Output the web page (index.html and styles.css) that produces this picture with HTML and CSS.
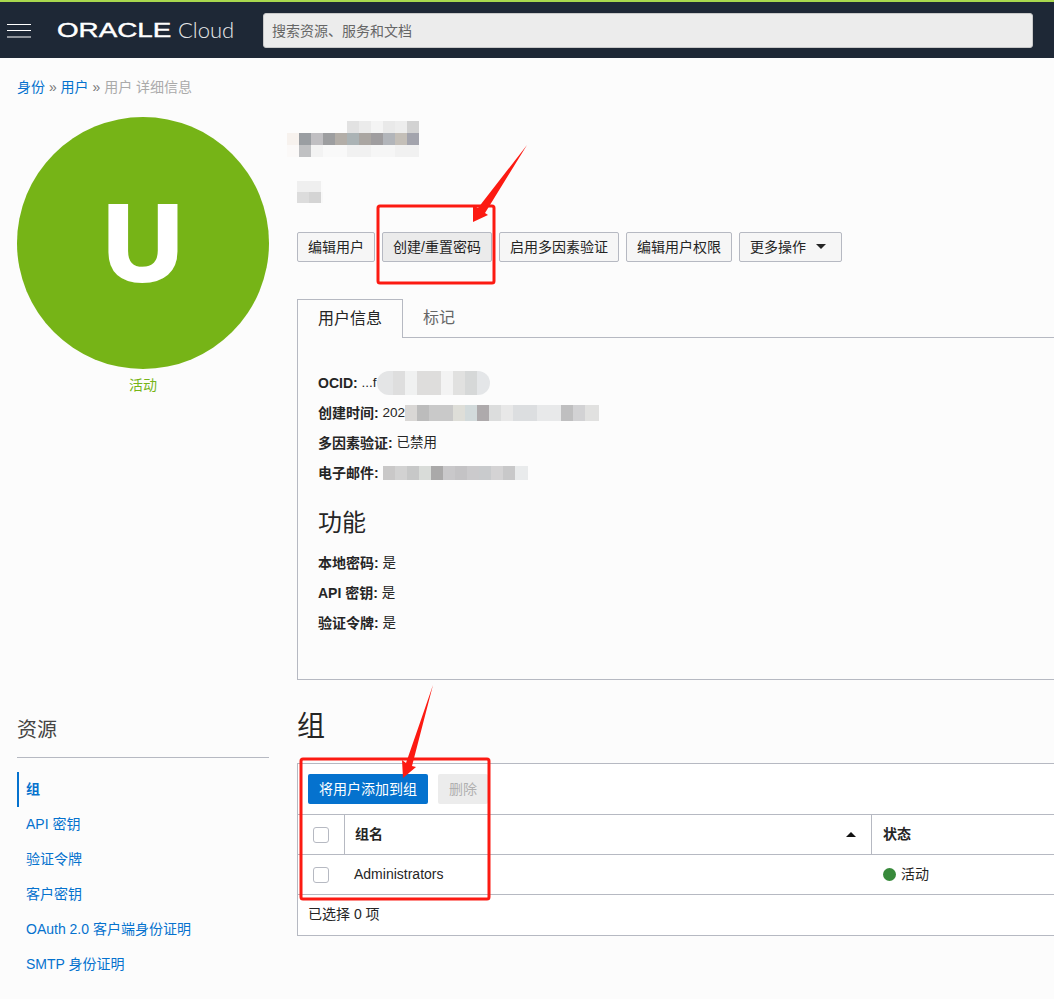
FILE: index.html
```html
<!DOCTYPE html>
<html lang="zh-CN">
<head>
<meta charset="utf-8">
<title>用户详细信息</title>
<link rel="stylesheet" href="styles.css">
</head>
<body>
<header class="topbar">
  <svg class="menu-icon" width="24" height="14" viewBox="0 0 24 14"><path d="M0 .5h24M0 6.5h24M0 13h24" stroke="#fff" fill="none"/></svg>
  <div class="logo"><span class="logo-oracle">ORACLE</span><span class="logo-cloud">Cloud</span></div>
  <input class="search" type="text" placeholder="搜索资源、服务和文档">
</header>
<nav class="crumbs"><a>身份</a> <span class="sep">»</span> <a>用户</a> <span class="sep">»</span> <span class="current">用户 详细信息</span></nav>
<section class="row top-row">
  <aside class="side">
    <div class="avatar">U</div>
    <div class="avatar-status">活动</div>
  </aside>
  <div class="main">
    <div class="blur blur-title"></div>
    <div class="blur blur-sub"></div>
    <div class="actions">
      <button class="btn">编辑用户</button>
      <button class="btn btn-hover">创建/重置密码</button>
      <button class="btn">启用多因素验证</button>
      <button class="btn">编辑用户权限</button>
      <button class="btn btn-more">更多操作<i class="caret"></i></button>
    </div>
    <div class="tabs"><span class="tab tab-active">用户信息</span><span class="tab">标记</span></div>
    <div class="panel">
      <p class="line"><b>OCID:</b> ...f<span class="blur blur-ocid"></span></p>
      <p class="line"><b>创建时间:</b> 202<span class="blur blur-date"></span></p>
      <p class="line"><b>多因素验证:</b> 已禁用</p>
      <p class="line"><b>电子邮件:</b><span class="blur blur-mail"></span></p>
      <h2 class="panel-title">功能</h2>
      <p class="line"><b>本地密码:</b> 是</p>
      <p class="line"><b>API 密钥:</b> 是</p>
      <p class="line"><b>验证令牌:</b> 是</p>
    </div>
  </div>
</section>
<section class="row bottom-row">
  <aside class="side">
    <h3 class="res-title">资源</h3>
    <ul class="res-nav">
      <li class="res-active">组</li>
      <li>API 密钥</li>
      <li>验证令牌</li>
      <li>客户密钥</li>
      <li>OAuth 2.0 客户端身份证明</li>
      <li>SMTP 身份证明</li>
    </ul>
  </aside>
  <div class="main">
    <h1 class="group-title">组</h1>
    <div class="table-box">
      <div class="toolbar"><button class="btn-primary">将用户添加到组</button><button class="btn-disabled">删除</button></div>
      <div class="trow thead">
        <div class="cell cell-check cell-sep"><i class="check"></i></div>
        <div class="cell cell-name cell-sep"><span class="cell-text">组名</span><i class="sort"></i></div>
        <div class="cell cell-status"><span class="cell-text">状态</span></div>
      </div>
      <div class="trow">
        <div class="cell cell-check"><i class="check"></i></div>
        <div class="cell cell-name cell-admin"><span class="cell-text">Administrators</span></div>
        <div class="cell cell-status"><i class="dot"></i><span class="cell-text">活动</span></div>
      </div>
      <div class="tfoot">已选择 0 项</div>
    </div>
  </div>
</section>
<svg class="marks" width="1054" height="999" viewBox="0 0 1054 999">
  <rect x="378" y="206" width="116" height="77" rx="2" fill="none" stroke="#fc1a12" stroke-width="3"/>
  <rect x="301" y="759" width="188" height="140" rx="2" fill="none" stroke="#fc1a12" stroke-width="3"/>
  <path d="M527 145L485 213 488 215 473 222 473 205 478 208Z" fill="#fc1a12"/>
  <path d="M433 685L412 766 416 767 403 778 402 760 406 763Z" fill="#fc1a12"/>
</svg>
</body>
</html>
```
FILE: styles.css
```css
* { box-sizing: border-box; }
html, body { margin: 0; height: 999px; overflow: hidden; }
body {
  position: relative;
  background: #fcfcfc;
  color: #252525;
  font: 14px/20px "Liberation Sans", "Noto Sans CJK SC", sans-serif;
}
.topbar {
  height: 58px;
  background: #1e2836;
  border-top: 2px solid #a9d84e;
  display: flex;
  align-items: center;
  padding-left: 7px;
}
.menu-icon { flex: none; margin-top: 1px; }
.logo { flex: none; display: flex; align-items: center; width: 206px; margin-left: 26px; color: #fff; }
.logo-oracle {
  width: 121px;
  font: 400 20px/24px "Liberation Sans", sans-serif;
  -webkit-text-stroke: 0.4px #fff;
  transform: scale(1.39, 0.98);
  transform-origin: left center;
}
.logo-cloud { font: 300 22px/28px Lato, sans-serif; color: #e6e8ea; }
.search {
  flex: none;
  width: 770px;
  height: 35px;
  margin-top: 1px;
  padding: 0 8px;
  background: #ececec;
  border: 1px solid #c9c9c9;
  border-radius: 3px;
  font: 14px "Liberation Sans", "Noto Sans CJK SC", sans-serif;
}
.search::placeholder { color: #666; opacity: 1; }
.crumbs { margin: 18px 0 0 17px; height: 22px; line-height: 22px; font-size: 14px; }
.crumbs a { color: #0572ce; }
.sep { color: #777; }
.current { color: #aaa; }
.row { display: flex; gap: 28px; padding-left: 17px; }
.top-row { margin-top: 19px; }
.bottom-row { margin-top: 28px; }
.side { flex: none; width: 252px; }
.main { flex: none; width: 800px; }
.avatar {
  width: 252px;
  height: 252px;
  border-radius: 50%;
  background: #76b417;
  color: #fff;
  font: 700 108px/252px "Liberation Sans", sans-serif;
  -webkit-text-stroke: 4px #fff;
  text-align: center;
}
.avatar-status { margin-top: 6px; text-align: center; font-size: 14px; line-height: 20px; color: #76b417; }
.blur { display: block; background-repeat: no-repeat; }
.blur-title {
  width: 132px;
  height: 36px;
  margin: 4px 0 0 -10px;
  background-image:
    linear-gradient(90deg, #fcfcfc 0 60px, #e2e2e2 60px 72px, #ebebeb 72px 84px, #f4f4f4 84px 96px, #e9e9e9 96px 108px, #ededed 108px 120px, #d2d2d2 120px 132px),
    linear-gradient(90deg, #f7f2ee 0 12px, #9a9ea2 12px 24px, #c0bfc2 24px 36px, #9d9ea0 36px 48px, #b3aea8 48px 60px, #abb3b5 60px 72px, #aaa6a2 72px 84px, #9f9d9f 84px 96px, #b2b5ba 96px 108px, #c4bfb8 108px 120px, #a3a4ad 120px 132px),
    linear-gradient(90deg, #fbf9f8 0 12px, #c0c1c3 12px 24px, #f3f3f3 24px 36px, #f9f9f9 36px 60px, #f1f1f1 60px 84px, #f6f6f6 84px 108px, #f1f1f1 108px 132px);
  background-size: 132px 12px;
  background-position: 0 0, 0 12px, 0 24px;
}
.blur-sub {
  width: 26px;
  height: 22px;
  margin-top: 24px;
  background-image:
    linear-gradient(90deg, #efefef 0 24px, #fbfbfb 24px),
    linear-gradient(90deg, #dcdcdc 0 12px, #d4d4d4 12px 24px, #f8f8f8 24px);
  background-size: 26px 11px;
  background-position: 0 0, 0 11px;
}
.actions { display: flex; gap: 7px; margin-top: 29px; }
.btn {
  height: 30px;
  padding: 0 10px 2px;
  background: #f6f6f6;
  border: 1px solid #b6b9c2;
  border-radius: 2px;
  color: #252525;
  font: 14px "Liberation Sans", "Noto Sans CJK SC", sans-serif;
}
.btn-hover { background: #ebebeb; }
.btn-more { display: flex; align-items: center; padding-right: 15px; }
.caret {
  margin-left: 10px;
  border: 5px solid transparent;
  border-top: 5px solid #252525;
  border-bottom: 0;
}
.tabs { display: flex; margin-top: 37px; height: 39px; position: relative; z-index: 1; }
.tab { padding: 0 20px; font-size: 16px; line-height: 37px; color: #666; }
.tab-active {
  color: #252525;
  background: #fcfcfc;
  border: 1px solid #b6b9c2;
  border-bottom: 0;
  padding: 0 20px;
}
.panel {
  height: 343px;
  margin-top: -1px;
  padding: 30px 0 0 20px;
  border: 1px solid #b6b9c2;
}
.line { margin: 0; height: 30px; line-height: 30px; font-size: 13.5px; display: flex; align-items: center; white-space: pre; }
.line b { font-size: 14px; }
.blur-ocid {
  width: 113px;
  height: 24px;
  margin-left: 1px;
  border-radius: 12px;
  background-image: linear-gradient(90deg, #e4e5e6 0 16px, #dedede 16px 28px, #f0f1f1 28px 40px, #dedddc 40px 64px, #f3f3f3 64px 76px, #e1e1e0 76px 88px, #d6d8d8 88px 100px, #e4e6e8 100px);
}
.blur-date {
  width: 194px;
  height: 16px;
  background-image: linear-gradient(90deg, #d9d7d5 0 12px, #bcbcbc 12px 24px, #c9c9c9 24px 48px, #deded8 48px 60px, #d2dadb 60px 72px, #aeaaac 72px 84px, #dcdddd 84px 96px, #e8e8e8 96px 108px, #dcdee0 108px 132px, #e8e9ea 132px 156px, #bfbfc0 156px 168px, #d2d2d4 168px 180px, #e1e1e0 180px);
}
.blur-mail {
  width: 145px;
  height: 14px;
  margin-left: 4px;
  background-image: linear-gradient(90deg, #c9c8c8 0 12px, #d2d2d2 12px 24px, #c7c8c8 24px 36px, #d9dcd9 36px 48px, #aaa9a9 48px 60px, #c9c8ca 60px 72px, #c4c3c5 72px 84px, #cbcacc 84px 96px, #c9cbcd 96px 108px, #d4d3d4 108px 120px, #c8c8c9 120px 132px, #e9ebec 132px);
}
.panel-title { margin: 20px 0 10px; height: 30px; font-size: 24px; font-weight: 400; line-height: 30px; }
.res-title {
  margin: 0;
  height: 50px;
  padding-top: 5px;
  border-bottom: 1px solid #b6b9c2;
  font-size: 20px;
  font-weight: 400;
  line-height: 34px;
  color: #444;
}
.res-nav { list-style: none; margin: 14px 0 0; padding: 0; }
.res-nav li { height: 35px; line-height: 35px; padding-left: 9px; color: #0572ce; font-size: 14px; }
.res-nav .res-active { border-left: 2px solid #0572ce; padding-left: 7px; font-weight: 700; }
.group-title { margin: 0; height: 36px; padding-top: 1px; font-size: 28px; line-height: 36px; font-weight: 400; }
.table-box { margin-top: 19px; background: #fff; border: 1px solid #b6b9c2; border-right: 0; height: 173px; }
.toolbar { display: flex; gap: 10px; height: 50px; padding: 10px; }
.btn-primary, .btn-disabled {
  height: 30px;
  padding: 0 0 2px;
  border: 0;
  border-radius: 2px;
  font: 14px "Liberation Sans", "Noto Sans CJK SC", sans-serif;
}
.btn-primary { width: 120px; background: #0572ce; color: #fff; }
.btn-disabled { width: 50px; background: #ececec; color: #b0b0b0; }
.trow { display: flex; height: 40px; border-top: 1px solid #b6b9c2; }
.cell { display: flex; align-items: center; }
.cell-text { position: relative; top: -1px; }
.cell-check { width: 47px; padding-left: 15px; }
.cell-name { width: 527px; padding: 0 15px 0 10px; justify-content: space-between; }
.cell-admin { padding-left: 9px; }
.thead .cell { font-weight: 700; }
.cell-sep { border-right: 1px solid #b6b9c2; }
.cell-status { padding-left: 11px; }
.check { width: 16px; height: 16px; background: #fff; border: 1px solid #b6b9c2; border-radius: 3px; }
.sort { border: 5px solid transparent; border-bottom: 5px solid #111; border-top: 0; }
.dot { width: 13px; height: 13px; margin-right: 5px; border-radius: 50%; background: #388a3b; }
.tfoot { height: 41px; padding-left: 10px; border-top: 1px solid #b6b9c2; line-height: 38px; }
.marks { position: absolute; left: 0; top: 0; pointer-events: none; }
```
